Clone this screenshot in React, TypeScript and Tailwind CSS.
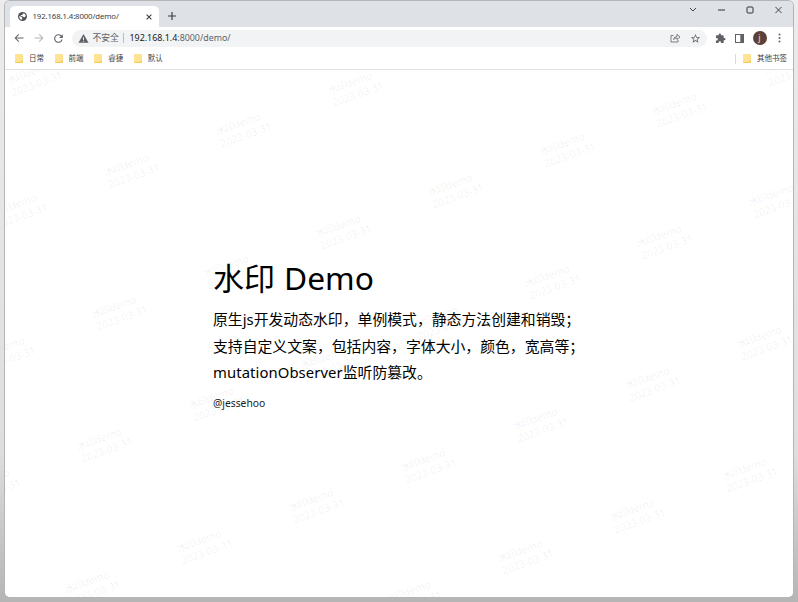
import type { ReactNode } from "react";

const COS = Math.cos(Math.PI / 9);
const SIN = Math.sin(Math.PI / 9);

// Slanted brick pattern: marks sit 119px apart, alternate rows are half a step off.
const marks: { x: number; y: number }[] = [];
for (let r = -2; r <= 6; r++) {
  const odd = Math.abs(r) % 2 === 1;
  const v = Math.floor(r / 2) * 248.8 + (odd ? 130 : 0);
  for (let c = -8; c <= 8; c++) {
    const u = c * 119.1 + (odd ? 59.5 : 0);
    const x = 320.7 + u * COS + v * SIN;
    const y = 15.2 - u * SIN + v * COS;
    if (x > -50 && x < 783 && y > -20 && y < 538) marks.push({ x, y });
  }
}

function Watermark() {
  return (
    <div aria-hidden="true" className="pointer-events-none absolute inset-0 overflow-hidden text-[10.3px] leading-[13.4px] text-black/7">
      {marks.map((m, i) => (
        <div key={i} className="absolute origin-top-left -rotate-20 whitespace-nowrap" style={{ left: m.x, top: m.y }}>
          <div><span className="tracking-[-0.9px]">水印</span>demo</div>
          <div>2023-03-31</div>
        </div>
      ))}
    </div>
  );
}

function Icon({ children, size = 12, className = "" }: { children: ReactNode; size?: number; className?: string }) {
  return (
    <svg width={size} height={size} viewBox="0 0 24 24" fill="currentColor" className={`shrink-0 ${className}`}>
      {children}
    </svg>
  );
}

function Bookmark({ label }: { label: string }) {
  return (
    <div className="flex items-center gap-[6px]">
      <svg width="8" height="9" viewBox="0 0 8 9" className="shrink-0">
        <path d="M0 1Q0 0 1 0h5.500q1 0 1 1v5.500l.5.5v1q0 1-1 1H1Q0 9 0 8Z" fill="#ffe391" />
        <path d="M0 7.800V8q0 1 1 1h6q1 0 1-1V6.500H6.800L6.300 8H.5ZM7 .8h.5v6H7Z" fill="#f0cb55" />
      </svg>
      <span className="whitespace-nowrap">{label}</span>
    </div>
  );
}

function TabStrip() {
  return (
    <div className="flex h-[26px] shrink-0 bg-[#dee1e6] text-[#3c4043]">
      <div className="ml-[5px] mt-[5px] flex h-[21px] w-[149px] items-center rounded-t-[5px] bg-white pl-[8px] pr-[7.500px]">
        <svg width="9" height="9" viewBox="0 0 18 18" className="shrink-0">
          <circle cx="9" cy="9" r="9" fill="#505459" />
          <path d="M2 8.500 6 9l2.500 2.500v2L7 15.500Q2.500 14 2 8.500ZM9.500 2.300 14 4l1.500 4-2.500 2.500L10 9.500 8 8H5.500V6.500L8 6l2-1.500Z" fill="#fff" />
        </svg>
        <span className="ml-[5.500px] flex-1 whitespace-nowrap text-[7.800px] tracking-[-0.120px]">192.168.1.4:8000/demo/</span>
        <svg width="6" height="6" viewBox="0 0 6 6" stroke="currentColor" strokeWidth="1.1"><path d="M.6.6l4.800 4.800M5.400.6.6 5.400" /></svg>
      </div>
      <svg width="8" height="8" viewBox="0 0 8 8" stroke="currentColor" strokeWidth="1.2" className="ml-[9px] mt-[11px]"><path d="M4 0v8M0 4h8" /></svg>
      <div className="ml-auto mr-[11px] mt-[4px] flex h-[9px] items-center gap-[21px] text-[#333]">
        <svg width="8" height="8" viewBox="0 0 8 8" fill="none" stroke="currentColor" strokeWidth=".9"><path d="m1 2 3 3 3-3" /></svg>
        <svg width="7" height="8" viewBox="0 0 7 8" stroke="currentColor"><path d="M0 4h7" /></svg>
        <svg width="8" height="8" viewBox="0 0 8 8" fill="none" stroke="currentColor"><rect x="1" y="1" width="6" height="6" rx="1" /></svg>
        <svg width="7" height="8" viewBox="0 0 7 8" stroke="currentColor" strokeWidth=".9"><path d="m.4.9 6.200 6.200M6.600.9.4 7.100" /></svg>
      </div>
    </div>
  );
}

function Toolbar() {
  return (
    <div className="flex h-[22px] shrink-0 items-center bg-white pl-[7.500px] pr-[8.500px] text-[#5f6368]">
      <Icon><path d="M21 11H6.800l5.600-5.600L11 4l-8 8 8 8 1.400-1.400L6.800 13H21z" /></Icon>
      <Icon className="ml-[8px] text-[#b4b6b9]"><path d="M3 11h14.200l-5.600-5.600L13 4l8 8-8 8-1.400-1.400 5.600-5.600H3z" /></Icon>
      <Icon size={13} className="ml-[7px]"><path d="M17.650 6.350A8 8 0 1 0 19.730 14h-2.080A6 6 0 1 1 12 6c1.660 0 3.140.690 4.220 1.780L13 11h7V4z" /></Icon>
      <div className="ml-[7px] flex h-[17px] flex-1 items-center rounded-full bg-[#f1f3f4] pl-[6px] pr-[6px]">
        <Icon size={11}><path fillRule="evenodd" d="M1 21h22L12 2ZM11 9h2v6h-2Zm0 8h2v2h-2Z" /></Icon>
        <span className="ml-[4px] mt-px w-[27px] whitespace-nowrap text-[8.800px]">不安全</span>
        <span className="ml-[3px] h-[10px] w-px bg-[#b9bcc0]" />
        <span className="ml-[6px] whitespace-nowrap text-[8.900px]"><span className="text-[#202124]">192.168.1.4</span>:8000/demo/</span>
        <svg width="11" height="10" viewBox="0 0 11 10" fill="none" stroke="currentColor" className="ml-auto"><path d="M3.500 2.500h-2.500v6.500h7V7" strokeWidth=".8" /><path d="M3.500 6.500Q4 3.500 7 3.500V1.200L10 4 7 6.500V5Q5 5 3.500 6.500Z" strokeWidth=".8" /></svg>
        <Icon size={11} className="ml-[9px]"><path fillRule="evenodd" d="m22 9.240-7.190-.62L12 2 9.190 8.630 2 9.240l5.460 4.730L5.820 21 12 17.270 18.180 21l-1.630-7.030zM12 15.400l-3.760 2.270 1-4.280-3.320-2.880 4.380-.38L12 6.100l1.710 4.040 4.380.380-3.320 2.880 1 4.280z" /></Icon>
      </div>
      <Icon size={11} className="ml-[8px]"><path d="M20.500 11H19V7a2 2 0 0 0-2-2h-4V3.500a2.500 2.500 0 0 0-5 0V5H4a2 2 0 0 0-2 2v3.800h1.500a2.700 2.700 0 0 1 0 5.400H2V20a2 2 0 0 0 2 2h3.800v-1.500a2.700 2.700 0 0 1 5.400 0V22H17a2 2 0 0 0 2-2v-4h1.500a2.500 2.500 0 0 0 0-5Z" /></Icon>
      <svg width="9" height="9" viewBox="0 0 9 9" className="ml-[9px]"><rect x=".5" y=".5" width="8" height="8" fill="none" stroke="currentColor" /><path d="M5.300 0H9v9H5.300Z" fill="currentColor" /></svg>
      <div className="ml-[9px] flex size-[14px] items-center justify-center rounded-full bg-[#5d4037] pb-px text-[9px] leading-none text-white/80">j</div>
      <svg width="3" height="10" viewBox="0 0 3 10" fill="currentColor" className="ml-[11px] mr-[4px]"><circle cx="1.500" cy="1.500" r="1" /><circle cx="1.500" cy="5" r="1" /><circle cx="1.500" cy="8.500" r="1" /></svg>
    </div>
  );
}

function BookmarksBar() {
  return (
    <div className="flex h-[21px] shrink-0 items-center border-b border-[#dfe0e2] bg-white pl-[10px] pr-[6px] pb-px text-[7.500px] text-[#3c4043]">
      <div className="flex gap-[10.600px]">
        <Bookmark label="日常" />
        <Bookmark label="前端" />
        <Bookmark label="睿捷" />
        <Bookmark label="默认" />
      </div>
      <span className="ml-auto mr-[7px] h-[10px] w-px bg-[#d8dadd]" />
      <Bookmark label="其他书签" />
    </div>
  );
}

export default function App() {
  return (
    <div className="h-[602px] w-[798px] overflow-hidden bg-linear-to-b from-[#ececec] via-[#dedede] via-75% to-[#b5b5b5] pl-[5px] pt-px font-['Noto_Sans','Noto_Sans_CJK_SC',sans-serif]">
      <div className="flex h-[596px] w-[788px] flex-col overflow-hidden rounded-[5px] bg-white shadow-[0_0_0_1px_#b3b5b7]">
        <TabStrip />
        <Toolbar />
        <BookmarksBar />
        <main className="relative flex-1 overflow-hidden bg-white pl-[208px] pt-[183px] text-black">
          <h1 className="whitespace-nowrap text-[31px] font-normal leading-[50px]">水印 <span className="ml-px text-[31.700px]">Demo</span></h1>
          <div className="mt-[3px] whitespace-nowrap text-[14.850px] leading-[26.700px]">
            <p>原生js开发动态水印，单例模式，静态方法创建和销毁；</p>
            <p>支持自定义文案，包括内容，字体大小，颜色，宽高等；</p>
            <p><span className="tracking-[0.080px]">mutationObserver</span>监听防篡改。</p>
          </div>
          <p className="mt-[10px] text-[10.300px] leading-[15px] text-[#222]">@jessehoo</p>
          <Watermark />
        </main>
      </div>
    </div>
  );
}
